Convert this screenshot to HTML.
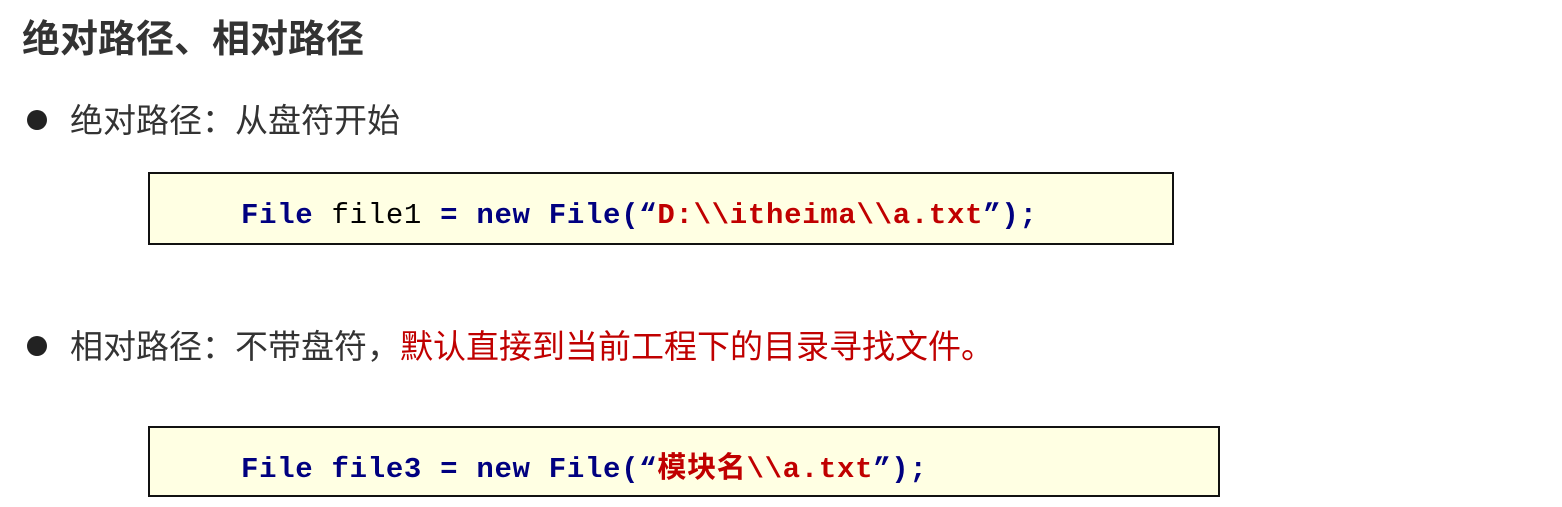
<!DOCTYPE html>
<html><head><meta charset="utf-8"><style>
body{margin:0;width:1562px;height:507px;background:#fff;position:relative;overflow:hidden;font-family:"Liberation Sans","Noto Sans CJK SC",sans-serif;}
.t{position:absolute;left:22px;top:15px;font-size:38px;font-weight:bold;color:#333;line-height:50px;}
.b{position:absolute;left:70px;font-size:33px;color:#333;line-height:44px;}
.dot{position:absolute;left:27px;width:20px;height:20px;border-radius:50%;background:#222;}
.box{position:absolute;left:148px;background:#ffffe3;border:2px solid #111;box-sizing:border-box;}
.code{position:absolute;left:91px;font-family:"Liberation Mono","Noto Sans CJK SC",monospace;font-size:29px;letter-spacing:0.7px;font-weight:bold;color:#000080;white-space:pre;line-height:40px;}
.r{color:#c00000}
.n{font-weight:normal;color:#000}
</style></head><body>
<div class="t">绝对路径、相对路径</div>
<div class="dot" style="top:110px"></div>
<div class="b" style="top:99px">绝对路径：从盘符开始</div>
<div class="box" style="top:172px;width:1026px;height:73px"><div class="code" style="top:22px">File <span class="n">file1</span> = new File(“<span class="r">D:\\itheima\\a.txt</span>”);</div></div>
<div class="dot" style="top:336px"></div>
<div class="b" style="top:325px">相对路径：不带盘符，<span style="color:#c00000">默认直接到当前工程下的目录寻找文件。</span></div>
<div class="box" style="top:426px;width:1072px;height:71px"><div class="code" style="top:22px">File file3 = new File(“<span class="r">模块名\\a.txt</span>”);</div></div>
</body></html>
